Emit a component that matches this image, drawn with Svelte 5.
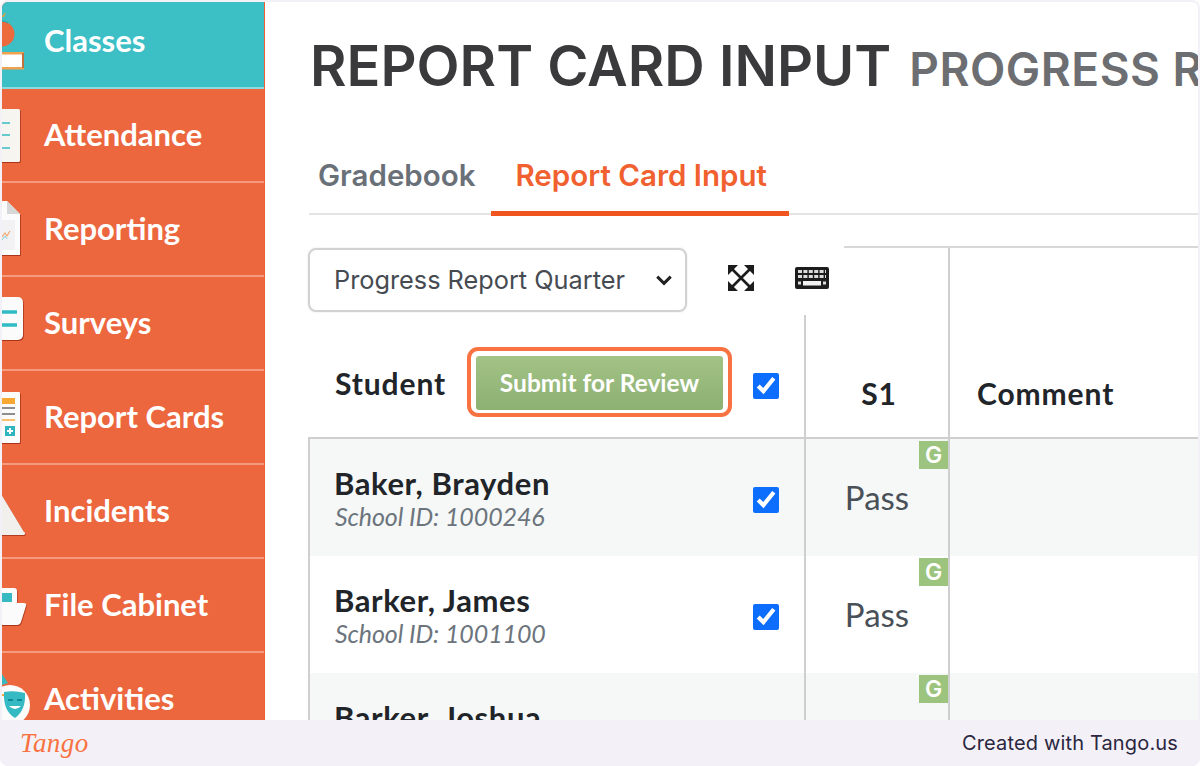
<script>
  const navItems = [
    { label: 'Classes', icon: 'classes', active: true },
    { label: 'Attendance', icon: 'attendance' },
    { label: 'Reporting', icon: 'reporting' },
    { label: 'Surveys', icon: 'surveys' },
    { label: 'Report Cards', icon: 'cards' },
    { label: 'Incidents', icon: 'incidents' },
    { label: 'File Cabinet', icon: 'files' },
    { label: 'Activities', icon: 'activities' }
  ];
  const students = [
    { name: 'Baker, Brayden', id: '1000246' },
    { name: 'Barker, James', id: '1001100' },
    { name: 'Barker, Joshua', id: '1001101' }
  ];
</script>

<div class="page">
  <div class="shot">
    <nav class="sidebar">
      {#each navItems as item}
        <a class="nav-item" class:active={item.active} href="#top">
          <svg class="nav-icon" viewBox="0 0 42 70" aria-hidden="true">
            {#if item.icon === 'classes'}
              <path d="M0 11h2l2-4-1 0-3 3z" fill="#d9a24a" />
              <circle cx="0" cy="28" r="12.500" fill="#ed6a3d" />
              <path d="M0 15q3 0 6 2" stroke="#2d9aa2" stroke-width="1" fill="none" />
              <rect x="0" y="46" width="22" height="17" fill="#fff" />
              <rect x="0" y="46" width="22" height="2.500" fill="#f1a250" />
              <rect x="0" y="61" width="22" height="2.500" fill="#f1a250" />
              <rect x="20" y="47" width="2" height="15" fill="#c3713c" />
            {:else if item.icon === 'attendance'}
              <rect x="-10" y="9" width="28" height="53" rx="1.500" fill="#a8351a" transform="translate(.8 1)" />
              <rect x="-10" y="9" width="28" height="53" rx="1.500" fill="#f7f5f0" />
              <path d="M0 23h8M0 35h8M0 48h8" stroke="#39bcc4" stroke-width="1.600" />
            {:else if item.icon === 'reporting'}
              <path d="M-8 7h13l13 13v41h-26z" fill="#a8351a" transform="translate(.8 1)" />
              <path d="M-8 7h13l13 13v41h-26z" fill="#fbfbfb" />
              <path d="M5 7l13 13h-13z" fill="#d7d7d7" />
              <rect x="0" y="26" width="13" height="30" fill="#f2f2f4" />
              <path d="M0 43l3-4 2 3 3-5" fill="none" stroke="#f0a66d" stroke-width="1.200" />
              <path d="M0 46l3-4 2 3" fill="none" stroke="#7fcfd4" stroke-width="1" />
            {:else if item.icon === 'surveys'}
              <rect x="-12" y="9" width="33" height="43" rx="5" fill="#a8351a" transform="translate(.8 1)" />
              <rect x="-12" y="9" width="33" height="43" rx="5" fill="#fbfbfb" />
              <path d="M0 24h15M0 37h15" stroke="#30bcc4" stroke-width="3.400" />
            {:else if item.icon === 'cards'}
              <rect x="-10" y="10" width="28" height="51" rx="1" fill="#a8351a" transform="translate(.8 1)" />
              <rect x="-10" y="10" width="28" height="51" rx="1" fill="#fbfbfb" />
              <rect x="0" y="16" width="13" height="6" fill="#f6a833" />
              <path d="M0 26h13M0 32h13" stroke="#8e8e8e" stroke-width="2" />
              <path d="M0 38h13" stroke="#f6a833" stroke-width="1.400" />
              <rect x="3" y="44" width="10" height="10" fill="#2fb5c0" />
              <path d="M8 46v6M5 49h6" stroke="#fff" stroke-width="2" />
            {:else if item.icon === 'incidents'}
              <path d="M-4 13l26 43a1.500 1.500 0 0 1-1 3h-25z" fill="#b03c20" transform="translate(.6 1)" />
              <path d="M-4 13l26 43a1.500 1.500 0 0 1-1 3h-25z" fill="#f2f0ec" />
            {:else if item.icon === 'files'}
              <path d="M-4 21a3 3 0 0 1 3-3h13a3 3 0 0 1 3 3v12h7q3 0 2 3l-5 16q-1 3-4 3h-19z" fill="#a8351a" transform="translate(.6 1)" />
              <path d="M-4 21a3 3 0 0 1 3-3h13a3 3 0 0 1 3 3v12h7q3 0 2 3l-5 16q-1 3-4 3h-19z" fill="#fbfbfb" />
              <rect x="0" y="23" width="10" height="9" fill="#37b9c2" />
            {:else if item.icon === 'activities'}
              <path d="M0 10l6 9-6 2z" fill="#37b9c2" />
              <circle cx="8" cy="41" r="20" fill="#fbfbfb" />
              <path d="M0 31l6 0" stroke="#f6a833" stroke-width="2" />
              <path d="M2 28q10-2 21 1q1 17-10 25q-12-7-11-26z" fill="#35b9c3" />
              <path d="M6 36h5M15 36h5" stroke="#0e8a93" stroke-width="2" />
              <path d="M7 42q6 6 12 0" fill="#fff" />
            {/if}
          </svg>
          <span>{item.label}</span>
        </a>
      {/each}
    </nav>

    <main class="main">
      <h1 class="title">REPORT CARD INPUT <small>PROGRESS REPORT QUARTER</small></h1>

      <div class="tabs">
        <a class="tab" href="#top">Gradebook</a>
        <a class="tab current" href="#top">Report Card Input</a>
      </div>

      <div class="sheet">
        <div class="head-row">
          <div class="student-head">
            <div class="toolbar">
              <div class="select">
                <span>Progress Report Quarter</span>
                <svg viewBox="0 0 16 10" aria-hidden="true"><path d="M2 2l6 6 6-6" fill="none" stroke="#222" stroke-width="2.600" /></svg>
              </div>
              <svg class="tool expand" viewBox="0 0 28 28" aria-hidden="true">
                <path d="M4 4l20 20M24 4L4 24" stroke="#1c1c1c" stroke-width="2.600" />
                <path d="M1 1h10L1 11zM27 1H17l10 10zM1 27h10L1 17zM27 27H17l10-10z" fill="#1c1c1c" />
              </svg>
              <svg class="tool keyboard" viewBox="0 0 36 24" aria-hidden="true">
                <rect x="1" y="1" width="34" height="22" rx="2" fill="#1c1c1c" />
                <path d="M4 5.500h28M4 10.500h28" stroke="#dcdcdc" stroke-width="3.200" stroke-dasharray="4 1.400" />
                <rect x="9" y="15" width="18" height="4.500" fill="#f2f2f2" />
                <path d="M4 17h3M29 17h3" stroke="#dcdcdc" stroke-width="3" />
              </svg>
            </div>
            <div class="student-bar">
              <span class="th">Student</span>
              <div class="ring">
                <button class="submit" type="button">Submit for Review</button>
              </div>
              <input class="check" type="checkbox" checked />
            </div>
          </div>
          <div class="s1-head th">S1</div>
          <div class="comment-head th">Comment</div>
        </div>

        {#each students as s, i}
          <div class="row" class:shade={i % 2 === 0}>
            <div class="student-cell">
              <div class="who">
                <div class="name">{s.name}</div>
                <div class="sid">School ID: {s.id}</div>
              </div>
              <input class="check" type="checkbox" checked />
            </div>
            <div class="grade-cell">
              <span class="badge">G</span>
              <span class="pass">Pass</span>
            </div>
            <div class="comment-cell"></div>
          </div>
        {/each}
      </div>
    </main>
  </div>

  <footer class="footer">
    <span class="logo">Tango</span>
    <span class="credit">Created with Tango.us</span>
  </footer>
</div>

<style>
  :global(body) {
    margin: 0;
    background: #fff;
  }
  .page {
    width: 1200px;
    height: 766px;
    display: flex;
    flex-direction: column;
    overflow: hidden;
    background: #f3f1f7;
    border-radius: 8px;
    font-family: Lato, "Liberation Sans", sans-serif;
  }
  .shot {
    height: 718px;
    flex: none;
    margin: 2px 2px 0;
    display: flex;
    overflow: hidden;
    background: #fff;
    border-radius: 6px 6px 0 0;
  }
  .sidebar {
    width: 263px;
    flex: none;
    background: #ec663e;
    border-right: 1px solid #f0602e;
    box-sizing: border-box;
  }
  .nav-item {
    height: 94px;
    box-sizing: border-box;
    display: flex;
    align-items: center;
    border-bottom: 2px solid #f49b7e;
    color: #fff;
    text-decoration: none;
    font-size: 31px;
    font-weight: 700;
  }
  .nav-item span {
    margin-top: -2px;
  }
  .nav-item.active {
    height: 87px;
    padding-bottom: 8px;
    background: #3dbfc6;
    border-bottom-color: #8adbe0;
  }
  .nav-icon {
    width: 42px;
    height: 70px;
    flex: none;
    overflow: hidden;
  }
  .main {
    flex: 1;
    min-width: 0;
    padding-left: 43px;
    overflow: hidden;
  }
  .title {
    margin: 34px 0 0 2px;
    height: 60px;
    white-space: nowrap;
    font-family: Inter, "Liberation Sans", sans-serif;
    font-size: 56px;
    line-height: 60px;
    font-weight: 600;
    color: #3a3a3c;
  }
  .title small {
    font-size: 46px;
    font-weight: 600;
    color: #6c6e72;
    margin-left: 4px;
    letter-spacing: 0.5px;
  }
  .tabs {
    margin: 56px 0 0 1px;
    height: 63px;
    box-sizing: border-box;
    display: flex;
    border-bottom: 2px solid #e4e4e4;
    font-family: Inter, "Liberation Sans", sans-serif;
  }
  .tab {
    height: 64px;
    box-sizing: border-box;
    padding: 5px 16px 0 9px;
    font-size: 29.500px;
    line-height: 36px;
    font-weight: 600;
    text-decoration: none;
    color: #6a7078;
  }
  .tab.current {
    padding: 5px 22px 0 24px;
    color: #f1602f;
    border-bottom: 5px solid #f0551e;
  }
  .sheet {
    margin-top: 31px;
  }
  .head-row {
    display: grid;
    grid-template-columns: 498px 144px 1fr;
    height: 193px;
    box-sizing: border-box;
    border-top: 2px solid #d8d8d8;
    border-bottom: 2px solid #cfcfcf;
  }
  .student-head {
    position: relative;
    border-right: 2px solid #cfcfcf;
    box-sizing: border-box;
    display: flex;
    flex-direction: column;
    min-width: 0;
  }
  .toolbar {
    position: relative;
    z-index: 1;
    width: 536px;
    height: 69px;
    margin-top: -2px;
    flex: none;
    background: #fff;
    display: flex;
    align-items: center;
    box-sizing: border-box;
    padding-bottom: 2px;
  }
  .select {
    width: 379px;
    height: 64px;
    box-sizing: border-box;
    display: flex;
    align-items: center;
    justify-content: space-between;
    padding: 0 12px 0 24px;
    border: 2px solid #d2d2d2;
    border-radius: 8px;
    box-shadow: 0 0 2px rgba(0, 0, 0, 0.12);
    font-family: Inter, Roboto, sans-serif;
    font-size: 25.300px;
    color: #464b52;
  }
  .select svg {
    width: 18px;
    height: 12px;
  }
  .tool {
    margin-bottom: 4px;
  }
  .tool.expand {
    width: 28px;
    height: 28px;
    margin-left: 40px;
  }
  .tool.keyboard {
    width: 36px;
    height: 24px;
    margin-left: 39px;
  }
  .student-bar {
    flex: 1;
    display: flex;
    align-items: center;
    padding-left: 27px;
    padding-top: 11px;
    box-sizing: border-box;
  }
  .th {
    font-family: Lato, "Liberation Sans", sans-serif;
    font-size: 30px;
    font-weight: 700;
    letter-spacing: 0.9px;
    color: #212529;
  }
  .student-bar .th {
    width: 132px;
    flex: none;
    margin-top: 2px;
  }
  .ring {
    box-sizing: border-box;
    width: 265px;
    height: 70px;
    flex: none;
    padding: 5px 5px 3px;
    border: 4px solid #f97242;
    border-radius: 11px;
  }
  .submit {
    display: block;
    width: 100%;
    height: 54px;
    padding: 0;
    border: 0;
    border-radius: 3px;
    background: linear-gradient(#a2c384, #8db073);
    color: #fff;
    font-family: Lato, "Liberation Sans", sans-serif;
    font-size: 24.500px;
    font-weight: 700;
  }
  .check {
    width: 26px;
    height: 26px;
    margin: 8px 0 0 21px;
    flex: none;
    accent-color: #0d6efd;
  }
  .s1-head {
    border-right: 2px solid #cfcfcf;
    box-sizing: border-box;
    display: flex;
    align-items: flex-end;
    justify-content: center;
    padding: 0 0 26px 4px;
  }
  .comment-head {
    display: flex;
    align-items: flex-end;
    padding: 0 0 26px 27px;
  }
  .row {
    display: grid;
    grid-template-columns: 498px 144px 1fr;
    height: 117px;
  }
  .row.shade {
    background: #f6f8f7;
  }
  .student-cell {
    box-sizing: border-box;
    border-left: 2px solid #cfcfcf;
    border-right: 2px solid #cfcfcf;
    display: flex;
    align-items: center;
    justify-content: space-between;
    padding: 0 25px 0 24px;
  }
  .student-cell .check {
    margin: 4px 0 0;
  }
  .name {
    font-size: 31px;
    line-height: 36px;
    font-weight: 700;
    color: #212529;
    letter-spacing: 0.6px;
  }
  .sid {
    font-size: 25px;
    line-height: 30px;
    font-style: italic;
    color: #6c757d;
    letter-spacing: -0.1px;
    padding-left: 1px;
  }
  .grade-cell {
    position: relative;
    box-sizing: border-box;
    border-right: 2px solid #cfcfcf;
    display: flex;
    align-items: center;
    justify-content: center;
  }
  .badge {
    position: absolute;
    top: 2px;
    right: 0;
    width: 29px;
    height: 28px;
    background: #9cc47f;
    color: #fff;
    font-family: Inter, "Liberation Sans", sans-serif;
    font-size: 23px;
    font-weight: 600;
    line-height: 28px;
    text-align: center;
  }
  .pass {
    font-size: 33px;
    color: #495057;
    margin-top: -2px;
  }
  .footer {
    flex: 1;
    display: flex;
    align-items: center;
    justify-content: space-between;
    padding: 0 22px 0 20px;
    background: #f3f1f7;
  }
  .logo {
    font-family: "Liberation Serif", serif;
    font-style: italic;
    font-size: 27px;
    color: #f97242;
    letter-spacing: 0.4px;
  }
  .credit {
    font-family: Inter, "Noto Sans", sans-serif;
    font-size: 20px;
    color: #2b2640;
    letter-spacing: 0.15px;
  }
</style>
